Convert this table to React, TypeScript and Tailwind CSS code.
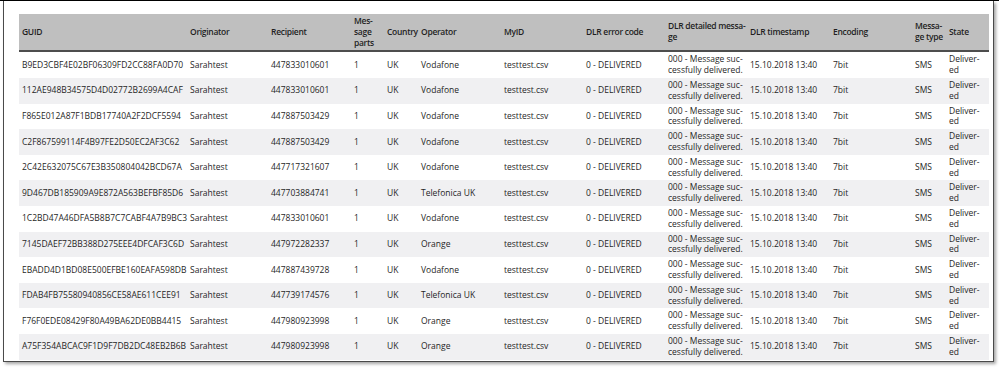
import React from 'react';

type Row = {
    guid: string;
    recipient: string;
    operator: string;
};

const rows: Row[] = [
    { guid: 'B9ED3CBF4E02BF06309FD2CC88FA0D70', recipient: '447833010601', operator: 'Vodafone' },
    { guid: '112AE948B34575D4D02772B2699A4CAF', recipient: '447833010601', operator: 'Vodafone' },
    { guid: 'F865E012A87F1BDB17740A2F2DCF5594', recipient: '447887503429', operator: 'Vodafone' },
    { guid: 'C2F867599114F4B97FE2D50EC2AF3C62', recipient: '447887503429', operator: 'Vodafone' },
    { guid: '2C42E632075C67E3B350804042BCD67A', recipient: '447717321607', operator: 'Vodafone' },
    { guid: '9D467DB185909A9E872A563BEFBF85D6', recipient: '447703884741', operator: 'Telefonica UK' },
    { guid: '1C2BD47A46DFA5B8B7C7CABF4A7B9BC3', recipient: '447833010601', operator: 'Vodafone' },
    { guid: '7145DAEF72BB388D275EEE4DFCAF3C6D', recipient: '447972282337', operator: 'Orange' },
    { guid: 'EBADD4D1BD08E500EFBE160EAFA598DB', recipient: '447887439728', operator: 'Vodafone' },
    { guid: 'FDAB4FB75580940856CE58AE611CEE91', recipient: '447739174576', operator: 'Telefonica UK' },
    { guid: 'F76F0EDE08429F80A49BA62DE0BB4415', recipient: '447980923998', operator: 'Orange' },
    { guid: 'A75F354ABCAC9F1D9F7DB2DC48EB2B6B', recipient: '447980923998', operator: 'Orange' },
];

const widths = [168, 81, 83, 33, 34, 83, 82, 82, 82, 83, 82, 34, 43];

// header labels are tight in their columns, so letters are pulled in a little
const th = 'px-[3px] py-[2px] text-left align-middle font-semibold tracking-[-0.3px] whitespace-nowrap';
const td = 'px-[3px] py-[2px] align-middle whitespace-nowrap';

export default function App() {
    return (
        <div className="w-[999px] h-[369px] bg-white overflow-hidden text-[#1f1f1f]" style={{ fontFamily: '"Open Sans", "Noto Sans", sans-serif' }}>
            <div className="h-px bg-black" />
            <div className="ml-[3px] w-[991px] h-[361px] border-x border-b border-[#4a4a4a] shadow-[2px_2px_3px_rgba(0,0,0,0.35)] pt-[13px] pl-[15px]">
                <table className="table-fixed w-[970px] border-collapse text-[8.5px] leading-[10.8px]">
                    <colgroup>
                        {widths.map((w, i) => (
                            <col key={i} style={{ width: w }} />
                        ))}
                    </colgroup>
                    <thead>
                        <tr className="bg-[#bfbfbf] border-b-2 border-[#4d4d4d] h-[36px]">
                            <th className={th}>GUID</th>
                            <th className={th}>Originator</th>
                            <th className={th}>Recipient</th>
                            <th className={th}>Mes-<br />sage<br />parts</th>
                            <th className={th}>Country</th>
                            <th className={th}>Operator</th>
                            <th className={th}>MyID</th>
                            <th className={th}>DLR error code</th>
                            <th className={th}>DLR detailed messa-<br />ge</th>
                            <th className={th}>DLR timestamp</th>
                            <th className={th}>Encoding</th>
                            <th className={th}>Messa-<br />ge type</th>
                            <th className={th}>State</th>
                        </tr>
                    </thead>
                    <tbody>
                        {rows.map((r, i) => (
                            <tr key={r.guid} className={i % 2 === 0 ? 'bg-white' : 'bg-[#f0f0f2]'}>
                                <td className={td}>{r.guid}</td>
                                <td className={td}>Sarahtest</td>
                                <td className={td}>{r.recipient}</td>
                                <td className={td}>1</td>
                                <td className={td}>UK</td>
                                <td className={td}>{r.operator}</td>
                                <td className={td}>testtest.csv</td>
                                <td className={td}>0 - DELIVERED</td>
                                <td className={td}>000 - Message suc-<br />cessfully delivered.</td>
                                <td className={td}>15.10.2018 13:40</td>
                                <td className={td}>7bit</td>
                                <td className={td}>SMS</td>
                                <td className={td}>Deliver-<br />ed</td>
                            </tr>
                        ))}
                    </tbody>
                </table>
            </div>
        </div>
    );
}
